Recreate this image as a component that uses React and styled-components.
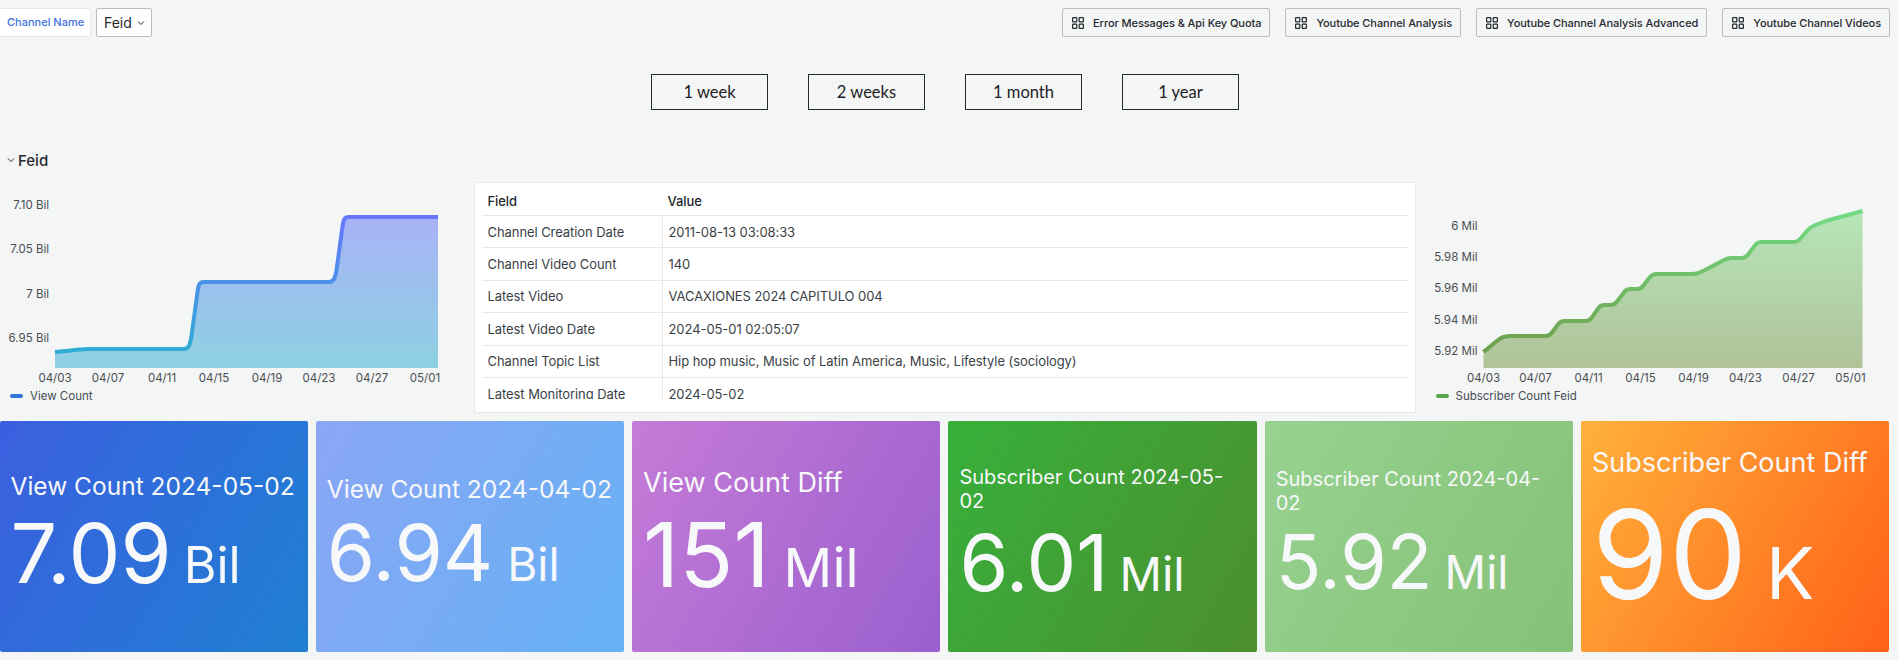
import React from 'react';
import styled, { createGlobalStyle } from 'styled-components';

const GlobalStyle = createGlobalStyle`
  html, body {
    margin: 0;
    padding: 0;
    background: #f4f5f5;
    overflow: hidden;
  }
  body {
    font-family: Inter, "Noto Sans", sans-serif;
    color: #24292e;
  }
`;

const links = [
  'Error Messages & Api Key Quota',
  'Youtube Channel Analysis',
  'Youtube Channel Analysis Advanced',
  'Youtube Channel Videos',
];
const ranges = ['1 week', '2 weeks', '1 month', '1 year'];
const tableRows = [
  ['Channel Creation Date', '2011-08-13 03:08:33'],
  ['Channel Video Count', '140'],
  ['Latest Video', 'VACAXIONES 2024 CAPITULO 004'],
  ['Latest Video Date', '2024-05-01 02:05:07'],
  ['Channel Topic List', 'Hip hop music, Music of Latin America, Music, Lifestyle (sociology)'],
  ['Latest Monitoring Date', '2024-05-02'],
];
const dates = ['04/03', '04/07', '04/11', '04/15', '04/19', '04/23', '04/27', '05/01'];

const BASELINE = 186;

const viewChart = {
  id: 'view',
  width: 383,
  stops: ['#6677fb', '#2eadd4'],
  fill: ['#a9b2f6', '#8dd1e2'],
  swatch: '#3274d9',
  legend: 'View Count',
  gutter: 55,
  ticks: [0, 53, 107, 159, 212, 264, 317, 370],
  yLabels: [['7.10 Bil', 23], ['7.05 Bil', 67], ['7 Bil', 111.5], ['6.95 Bil', 156]],
  lineTop: 35,
  lineBottom: 170,
  points: [[0, 170], [20, 168], [30, 167], [133, 167], [136, 158], [143, 106], [145, 100], [278, 100], [281, 92], [288, 41], [290, 35], [383, 35]],
};

const subChart = {
  id: 'sub',
  width: 379,
  stops: ['#72db84', '#6ea04c'],
  fill: ['#b6e6b9', '#b0c298'],
  swatch: '#56a64b',
  legend: 'Subscriber Count Feid',
  gutter: 67.5,
  ticks: [0, 52, 105, 157, 210, 262, 315, 367],
  yLabels: [['6 Mil', 43.7], ['5.98 Mil', 75], ['5.96 Mil', 106], ['5.94 Mil', 138], ['5.92 Mil', 169]],
  lineTop: 29,
  lineBottom: 170,
  points: [[0, 170], [17, 156], [23, 154], [66, 154], [77, 139], [106, 139], [117, 123], [131, 123], [143, 107], [157, 107], [169, 92], [212, 92], [220, 89], [244, 76], [262, 76], [274, 60], [314, 60], [327, 45], [342, 39], [379, 29]],
};

const cards = [
  { title: 'View Count 2024-05-02', value: '7.09', unit: 'Bil', from: '#3b5fdf', to: '#1f80d3', titleSize: 24.5, valueSize: 82.5, unitSize: 50, unitGap: 12 },
  { title: 'View Count 2024-04-02', value: '6.94', unit: 'Bil', from: '#8ba6f4', to: '#65b1f5', titleSize: 24.5, valueSize: 78, unitSize: 46, unitGap: 14 },
  { title: 'View Count Diff', value: '151', unit: 'Mil', from: '#c57bd7', to: '#9a5fce', titleSize: 27, valueSize: 89, unitSize: 54, unitGap: 14 },
  { title: 'Subscriber Count 2024-05-02', value: '6.01', unit: 'Mil', from: '#37b03a', to: '#4c8f30', titleSize: 20, valueSize: 79, unitSize: 47, unitGap: 11 },
  { title: 'Subscriber Count 2024-04-02', value: '5.92', unit: 'Mil', from: '#97d291', to: '#85c176', titleSize: 20, valueSize: 75, unitSize: 46, unitGap: 12 },
  { title: 'Subscriber Count Diff', value: '90', unit: 'K', from: '#ffb13b', to: '#ff6118', titleSize: 27, valueSize: 124, unitSize: 72, unitGap: 19 },
];

// rounds the corners of a polyline so steps look like the smooth series in the panel
const smoothPath = points => {
  let d = `M${points[0][0]} ${points[0][1]}`;
  for (let i = 1; i < points.length - 1; i++) {
    const [px, py] = points[i - 1];
    const [x, y] = points[i];
    const [nx, ny] = points[i + 1];
    const r = 4;
    const l1 = Math.hypot(x - px, y - py) || 1;
    const l2 = Math.hypot(nx - x, ny - y) || 1;
    const a = Math.min(r, l1 / 2) / l1;
    const b = Math.min(r, l2 / 2) / l2;
    d += `L${x - (x - px) * a} ${y - (y - py) * a}Q${x} ${y} ${x + (nx - x) * b} ${y + (ny - y) * b}`;
  }
  const last = points[points.length - 1];
  return `${d}L${last[0]} ${last[1]}`;
};

const Page = styled.div`
  width: 1898px;
  height: 660px;
  overflow: hidden;
`;

const TopBar = styled.div`
  display: flex;
  justify-content: space-between;
  height: 29px;
  padding: 8px 8px 0 0;
`;

const Group = styled.div`
  display: flex;
  gap: ${p => p.$gap}px;
`;

const VariableLabel = styled.div`
  display: flex;
  align-items: center;
  width: 92px;
  margin-left: -1px;
  padding: 0 0 2px 7px;
  box-sizing: border-box;
  background: #fff;
  border: 1px solid #e6e8ea;
  border-radius: 2px;
  color: #3d71e0;
  font-size: 11px;
  font-weight: 500;
  white-space: nowrap;
`;

const VariableSelect = styled.div`
  display: flex;
  align-items: center;
  gap: 5px;
  width: 56px;
  padding-left: 7px;
  box-sizing: border-box;
  background: #fff;
  border: 1px solid #b9bcc0;
  border-radius: 2px;
  font-size: 14px;
`;

const LinkButton = styled.div`
  display: flex;
  align-items: center;
  gap: 9px;
  height: 29px;
  padding: 0 8px 0 9px;
  box-sizing: border-box;
  background: #f4f5f5;
  border: 1px solid #b9bcc0;
  border-radius: 2px;
  font-size: 11px;
  letter-spacing: -0.07px;
  font-weight: 500;
  white-space: nowrap;
  color: #24292e;
`;

const RangeRow = styled.div`
  display: flex;
  justify-content: center;
  gap: 40px;
  margin-top: 37px;
  padding-right: 8px;
`;

const RangeButton = styled.div`
  display: flex;
  align-items: center;
  justify-content: center;
  width: 117px;
  height: 36px;
  box-sizing: border-box;
  border: 1px solid #24292e;
  font-family: Lato, sans-serif;
  font-size: 16.5px;
  color: #1d2125;
`;

const RowHeader = styled.div`
  display: flex;
  align-items: center;
  gap: 3px;
  height: 20px;
  margin-top: 40px;
  padding-left: 7px;
  font-size: 15px;
  font-weight: 450;
`;

const PanelRow = styled.div`
  display: flex;
  margin-top: 12px;
  height: 232px;
`;

const ChartPanel = styled.div`
  position: relative;
  width: ${p => p.$width}px;
  flex: none;
`;

const AxisText = styled.text`
  font-family: Inter, sans-serif;
  font-size: 11.5px;
  fill: #4a4d52;
`;

const Legend = styled.div`
  position: absolute;
  top: 207px;
  left: ${p => p.$left}px;
  display: flex;
  align-items: center;
  gap: 7px;
  font-size: 11.5px;
  line-height: 14px;
  color: #464c54;
`;

const Swatch = styled.span`
  width: 13px;
  height: 4px;
  border-radius: 2px;
  background: ${p => p.$color};
`;

const TablePanel = styled.div`
  width: 942px;
  height: 231px;
  padding: 0 7px;
  box-sizing: border-box;
  background: #fff;
  border: 1px solid #e6e8ea;
  border-radius: 2px;
  flex: none;
`;

const TableClip = styled.div`
  height: 216px;
  overflow: hidden;
`;

const TableRow = styled.div`
  display: grid;
  grid-template-columns: 180px 1fr;
  height: ${p => (p.$head ? 33 : 32.4)}px;
  padding-top: ${p => (p.$head ? 4 : 0)}px;
  box-sizing: border-box;
  border-bottom: 1px solid #e6e8ea;
  font-size: 13px;
  letter-spacing: -0.07px;
  font-weight: ${p => (p.$head ? 500 : 400)};
  color: ${p => (p.$head ? '#24292e' : '#3a3f46')};
`;

const TableCell = styled.div`
  display: flex;
  align-items: center;
  padding-left: 6px;
  border-left: ${p => (p.$divided ? '1px solid #e6e8ea' : 'none')};
`;

const CardRow = styled.div`
  display: grid;
  grid-template-columns: repeat(6, 308.3px);
  gap: 8px;
  height: 231px;
  margin: 7px 0 0 -0.5px;
`;

const Card = styled.div`
  display: flex;
  flex-direction: column;
  justify-content: center;
  padding: 0 12px 0 11px;
  box-sizing: border-box;
  background: linear-gradient(120deg, ${p => p.$from}, ${p => p.$to});
  border-radius: 2px;
  color: #f7f8fa;
`;

const CardTitle = styled.div`
  font-size: ${p => p.$size}px;
  line-height: 1.2;
  font-weight: 400;
`;

const CardValue = styled.div`
  display: flex;
  align-items: baseline;
  margin-top: 4px;
  font-size: ${p => p.$size}px;
  line-height: 1.15;
  font-weight: 400;
  white-space: nowrap;
`;

const CardUnit = styled.span`
  margin-left: ${p => p.$gap}px;
  font-size: ${p => p.$size}px;
`;

const Chevron = () => (
  <svg width="8" height="8" viewBox="0 0 8 8" fill="none" stroke="#24292e" strokeWidth="1">
    <path d="M1 2.5 4 5.5 7 2.5" />
  </svg>
);

const AppsIcon = () => (
  <svg width="12" height="12" viewBox="0 0 12 12" fill="none" stroke="#24292e" strokeWidth="1.2">
    <rect x="0.6" y="0.6" width="4.2" height="4.2" rx="0.6" />
    <rect x="7.2" y="0.6" width="4.2" height="4.2" rx="0.6" />
    <rect x="0.6" y="7.2" width="4.2" height="4.2" rx="0.6" />
    <rect x="7.2" y="7.2" width="4.2" height="4.2" rx="0.6" />
  </svg>
);

const TimeChart = ({ chart }) => {
  const { id, width, stops, fill, points, gutter, ticks, yLabels } = chart;
  const line = smoothPath(points);
  return (
    <svg width={gutter + width + 24} height="232">
      <defs>
        <linearGradient id={`${id}-line`} gradientUnits="userSpaceOnUse" x1="0" y1={chart.lineTop} x2="0" y2={chart.lineBottom}>
          <stop offset="0" stopColor={stops[0]} />
          <stop offset="1" stopColor={stops[1]} />
        </linearGradient>
        <linearGradient id={`${id}-fill`} gradientUnits="userSpaceOnUse" x1="0" y1={chart.lineTop} x2="0" y2={BASELINE}>
          <stop offset="0" stopColor={fill[0]} />
          <stop offset="1" stopColor={fill[1]} />
        </linearGradient>
      </defs>
      {yLabels.map(([label, y]) => (
        <AxisText key={label} x={gutter - 6} y={y + 4} textAnchor="end">{label}</AxisText>
      ))}
      <g transform={`translate(${gutter} 0)`}>
        <path d={`${line}L${width} ${BASELINE}L0 ${BASELINE}Z`} fill={`url(#${id}-fill)`} />
        <path d={line} fill="none" stroke={`url(#${id}-line)`} strokeWidth="4" strokeLinejoin="round" />
        {ticks.map((x, i) => (
          <AxisText key={dates[i]} x={x} y={BASELINE + 14} textAnchor="middle">{dates[i]}</AxisText>
        ))}
      </g>
    </svg>
  );
};

export default function App() {
  return (
    <Page>
      <GlobalStyle />
      <TopBar>
        <Group $gap={5}>
          <VariableLabel>Channel Name</VariableLabel>
          <VariableSelect>Feid <Chevron /></VariableSelect>
        </Group>
        <Group $gap={15}>
          {links.map(link => (
            <LinkButton key={link}><AppsIcon />{link}</LinkButton>
          ))}
        </Group>
      </TopBar>
      <RangeRow>
        {ranges.map(range => <RangeButton key={range}>{range}</RangeButton>)}
      </RangeRow>
      <RowHeader><Chevron />Feid</RowHeader>
      <PanelRow>
        <ChartPanel $width={473.5}>
          <TimeChart chart={viewChart} />
          <Legend $left={10}><Swatch $color={viewChart.swatch} />{viewChart.legend}</Legend>
        </ChartPanel>
        <TablePanel>
          <TableClip>
            <TableRow $head>
              <TableCell>Field</TableCell>
              <TableCell>Value</TableCell>
            </TableRow>
            {tableRows.map(([field, value]) => (
              <TableRow key={field}>
                <TableCell>{field}</TableCell>
                <TableCell $divided>{value}</TableCell>
              </TableRow>
            ))}
          </TableClip>
        </TablePanel>
        <ChartPanel $width={482.5}>
          <TimeChart chart={subChart} />
          <Legend $left={20}><Swatch $color={subChart.swatch} />{subChart.legend}</Legend>
        </ChartPanel>
      </PanelRow>
      <CardRow>
        {cards.map(card => (
          <Card key={card.title} $from={card.from} $to={card.to}>
            <CardTitle $size={card.titleSize}>{card.title}</CardTitle>
            <CardValue $size={card.valueSize}>
              {card.value}
              <CardUnit $size={card.unitSize} $gap={card.unitGap}>{card.unit}</CardUnit>
            </CardValue>
          </Card>
        ))}
      </CardRow>
    </Page>
  );
}
